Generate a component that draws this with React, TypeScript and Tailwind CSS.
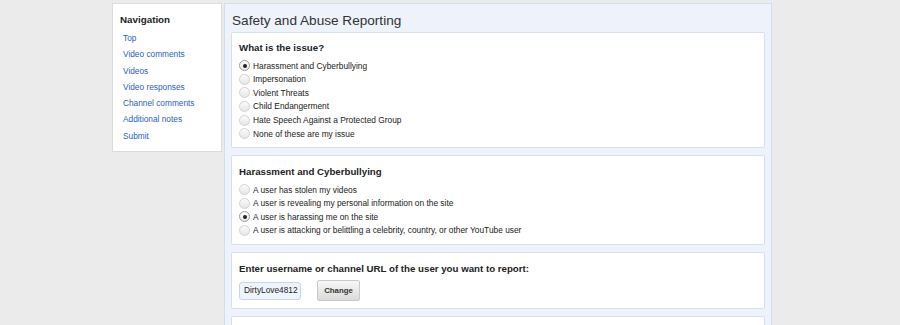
import React from "react";

const navLinks = [
  "Top",
  "Video comments",
  "Videos",
  "Video responses",
  "Channel comments",
  "Additional notes",
  "Submit",
];

const issues = [
  "Harassment and Cyberbullying",
  "Impersonation",
  "Violent Threats",
  "Child Endangerment",
  "Hate Speech Against a Protected Group",
  "None of these are my issue",
];

const harassment = [
  "A user has stolen my videos",
  "A user is revealing my personal information on the site",
  "A user is harassing me on the site",
  "A user is attacking or belittling a celebrity, country, or other YouTube user",
];

const Radio: React.FC<{ checked?: boolean }> = ({ checked }) => (
  <span
    className={`flex h-[11px] w-[11px] shrink-0 items-center justify-center rounded-full border ${
      checked
        ? "border-[#9a9a9a] bg-gradient-to-b from-white to-[#e9e9e9]"
        : "border-[#d2d2d2] bg-gradient-to-b from-[#fbfbfb] to-[#e6e6e6]"
    }`}
  >
    {checked && <span className="h-[4px] w-[4px] rounded-full bg-[#222]" />}
  </span>
);

const RadioList: React.FC<{ items: string[]; selected: number }> = ({ items, selected }) => (
  <div className="mt-[4px] flex flex-col">
    {items.map((label, i) => (
      <label key={label} className="flex h-[13.6px] items-center gap-[3px] text-[8.35px] text-[#222]">
        <Radio checked={i === selected} />
        <span>{label}</span>
      </label>
    ))}
  </div>
);

const Card: React.FC<{ className?: string; title: string; children: React.ReactNode }> = ({
  className,
  title,
  children,
}) => (
  <div className={`rounded-[2px] border border-[#d6dff2] bg-white px-[7px] ${className ?? ""}`}>
    <div className="flex h-[14px] items-center text-[9.7px] font-bold text-[#222]">{title}</div>
    {children}
  </div>
);

export default function App() {
  return (
    <div
      className="flex h-[325px] items-start gap-[2px] overflow-hidden bg-[#ebebeb] pl-[112px] pt-[3px]"
      style={{ fontFamily: '"Liberation Sans", Arial, sans-serif' }}
    >
      {/* sidebar */}
      <nav className="h-[149px] w-[110px] shrink-0 border border-[#dcdcdc] bg-white pl-[7px] pt-[9px]">
        <div className="flex h-[14px] items-center text-[9.8px] font-bold text-[#222]">Navigation</div>
        <ul className="mt-[3px] flex flex-col pl-[3px]">
          {navLinks.map((l) => (
            <li key={l} className="flex h-[16.3px] items-center text-[8.3px] text-[#2862b9]">
              <a href="#">{l}</a>
            </li>
          ))}
        </ul>
      </nav>

      {/* main panel */}
      <main className="h-[340px] w-[548px] shrink-0 border border-[#d3ddf0] bg-[#edf2fb] px-[6px]">
        <h1 className="flex h-[28px] items-center pl-[1px] pt-[7px] text-[13.6px] text-[#333]">
          Safety and Abuse Reporting
        </h1>

        <div className="flex flex-col gap-[7px]">
          <Card title="What is the issue?" className="h-[116px] pt-[8px]">
            <RadioList items={issues} selected={0} />
          </Card>

          <Card title="Harassment and Cyberbullying" className="h-[90px] pt-[9px]">
            <RadioList items={harassment} selected={2} />
          </Card>

          <Card
            title="Enter username or channel URL of the user you want to report:"
            className="h-[57px] pt-[9px]"
          >
            <div className="mt-[4px] flex items-center gap-[16px]">
              <div className="flex h-[18px] w-[62px] items-center rounded-[3px] border border-[#c6d4ee] bg-[#eef3fc] px-[4px] text-[8.3px] text-[#222]">
                DirtyLove4812
              </div>
              <button
                type="button"
                className="h-[21px] w-[43px] rounded-[2px] border border-[#c9c9c9] bg-gradient-to-b from-[#f7f7f7] to-[#dadada] text-[7.8px] font-bold text-[#333]"
              >
                Change
              </button>
            </div>
          </Card>

          <div className="h-[40px] rounded-[2px] border border-[#d6dff2] bg-white" />
        </div>
      </main>
    </div>
  );
}
